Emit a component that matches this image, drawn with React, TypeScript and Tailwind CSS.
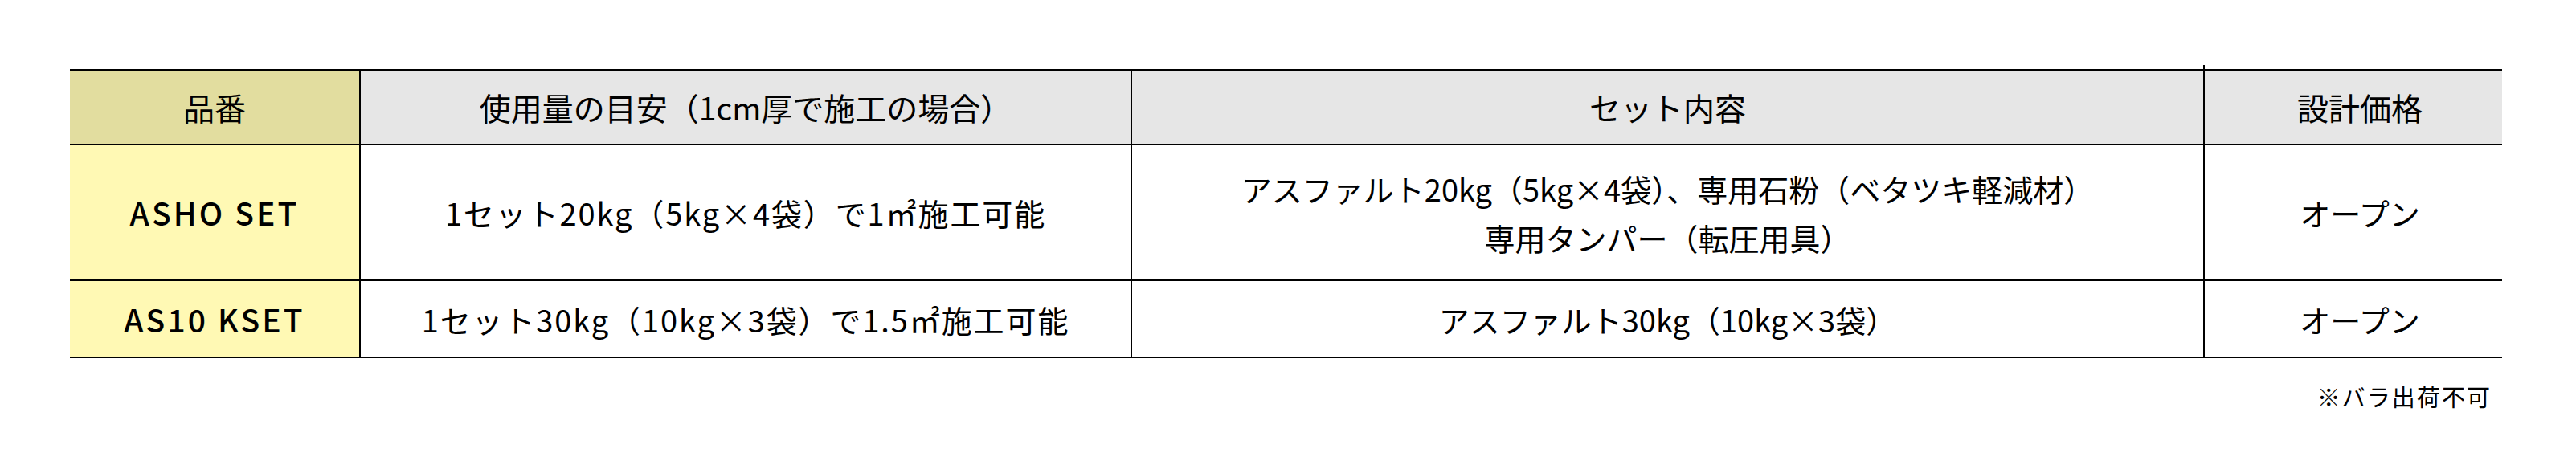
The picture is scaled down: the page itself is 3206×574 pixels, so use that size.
const font = "[font-family:'Noto_Sans_CJK_JP','Noto_Sans',sans-serif]";

const rows = [
  {
    code: "ASHO SET",
    usage: "1セット20kg（5kg×4袋）で1㎡施工可能",
    contents: ["アスファルト20kg（5kg×4袋）、専用石粉（ベタツキ軽減材）", "専用タンパー（転圧用具）"],
    price: "オープン",
    h: "h-[169px]",
  },
  {
    code: "AS10 KSET",
    usage: "1セット30kg（10kg×3袋）で1.5㎡施工可能",
    contents: ["アスファルト30kg（10kg×3袋）"],
    price: "オープン",
    h: "h-[96px]",
  },
];

const grid = "grid grid-cols-[360px_960px_1335px_372px] border-b-2 border-black";
const cell = "flex flex-col items-center justify-center text-center";

export default function App() {
  return (
    <div className={`min-h-[574px] bg-white pt-[86px] pl-[87px] text-black ${font}`}>
      <div className="w-[3027px]">
        <div className={`${grid} h-[95px] border-t-2`}>
          <div className={`${cell} bg-[#e2dd9f] text-[39px]`}>品番</div>
          <div className={`${cell} border-l-2 border-black bg-[#e6e6e6] text-[39px]`}>
            使用量の目安（1cm厚で施工の場合）
          </div>
          <div className={`${cell} border-l-2 border-black bg-[#e6e6e6] text-[39px]`}>セット内容</div>
          <div className={`${cell} relative border-l-2 border-black bg-[#e6e6e6] pl-4 text-[39px]`}>
            設計価格
            <span className="absolute -left-[2px] -top-[7px] h-[5px] w-[2px] bg-black" />
          </div>
        </div>

        {rows.map((r) => (
          <div key={r.code} className={`${grid} ${r.h}`}>
            <div className={`${cell} bg-[#fff9b4] text-[39px] font-medium tracking-[0.08em]`}>{r.code}</div>
            <div className={`${cell} border-l-2 border-black text-[38px] tracking-[0.05em]`}>{r.usage}</div>
            <div className={`${cell} border-l-2 border-black text-[38px] leading-[61px]`}>
              {r.contents.map((c) => (
                <div key={c}>{c}</div>
              ))}
            </div>
            <div className={`${cell} border-l-2 border-black pl-4 text-[38px]`}>{r.price}</div>
          </div>
        ))}

        <div className="mt-[26px] flex justify-end pr-[13px] text-[29px] leading-[42px] tracking-[0.07em]">
          ※バラ出荷不可
        </div>
      </div>
    </div>
  );
}
